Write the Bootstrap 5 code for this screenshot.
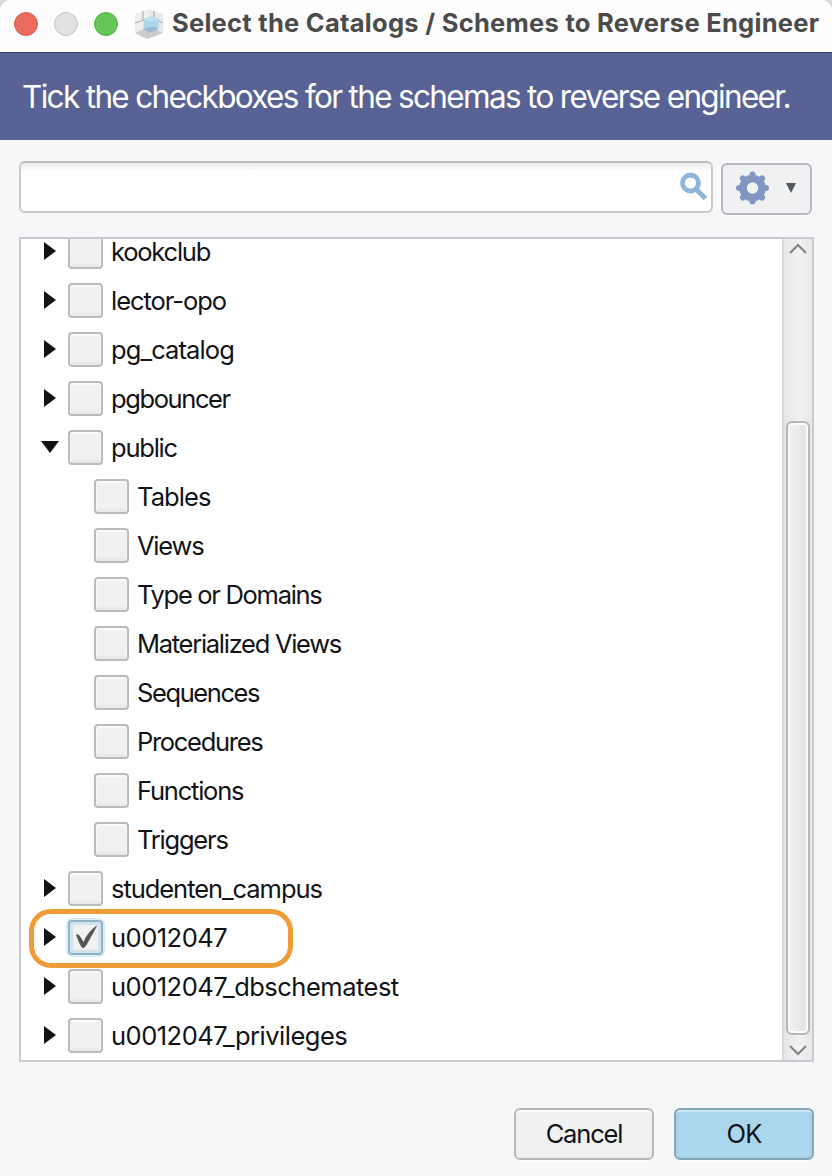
<!DOCTYPE html>
<html lang="en">
<head>
<meta charset="utf-8">
<title>Select the Catalogs / Schemes to Reverse Engineer</title>
<link href="https://cdn.jsdelivr.net/npm/bootstrap@5.3.0/dist/css/bootstrap.min.css" rel="stylesheet">
<style>
body{font-family:Inter,"Liberation Sans",sans-serif;font-size:25.5px;letter-spacing:-1.22px;color:#111317;background:#f5f7f9;line-height:1.2}
.dialog{width:832px;height:1176px;overflow:hidden;background:#f5f7f9}
.titlebar{height:53px;background:#fdfdfd;border-bottom:1px solid #303d75;padding:0 0 5px 14px;border-radius:10px 10px 0 0}
.backing{background:#d9d9dc}
.light{width:24px;height:24px;border-radius:50%;margin-right:16px;border:1px solid #d95b50;background:#eb6b5f}
.light.off{background:#e2e2e2;border-color:#c5c5c5}
.light.go{background:#63c655;border-color:#55ad47}
.title-text{font-size:25.5px;font-weight:700;letter-spacing:.27px;color:#4b4b4b;white-space:nowrap;margin:0 0 0 8px}
.banner{height:87px;background:#596295;color:#fff;font-size:31.5px;letter-spacing:-1.67px;padding:0 0 0 22px;white-space:nowrap}
.search{width:694px;height:52px;margin-top:1px;border:2px solid #c8cacb;border-top-color:#b9bbbc;border-radius:6px;background:linear-gradient(#ececec,#fff 9px);padding-right:3px}
.tool{width:91px;height:52px;margin:3px 1px 0 0;border:2px solid #b7b8bb;border-radius:6px;background:#f0f1f3;box-shadow:0 0 0 2px #fafbfc;padding:0 14px 2px 13px}
.tree-box{height:825px;margin:22px 18px 0 19px;border:2px solid #c9cacd;background:#fff}
.tree{margin-top:-12px}
.node{height:49px;padding-left:23px}
.node.child{padding-left:73px}
.node .label-text{margin-top:2px}
.node .numeric{letter-spacing:-.51px}
.node .wide{letter-spacing:-1.05px}
.arrow{width:12px;height:18px;margin:-1px 12px 0 0;background:#111317;clip-path:polygon(0 0,100% 50%,0 100%)}
.arrow.open{width:18px;height:12px;margin:-1px 9px 0 -3px;clip-path:polygon(0 0,100% 0,50% 100%)}
.box{width:35px;height:35px;border:2px solid #babbbc;border-radius:4px;background:#f0f1f3;box-shadow:inset 0 1px 1px 1px #fbfbfc,inset 0 -2px 2px 1px #e6e7e9;margin-right:8px}
.box.on{border-color:#94b3c7;box-shadow:0 0 0 2px #d8edf5,inset 0 0 1px 3px #cfe4ec}
.ring{left:8px;top:-4px;width:264px;height:59px;border:5px solid #ef9b38;border-radius:22px}
.scroll{width:30px;border-left:2px solid #d9dadb;background:linear-gradient(90deg,#e5e6e8,#f1f2f2 55%,#e7e8ea);padding:4px 2px 4px}
.thumb{width:24px;height:614px;margin-top:166px;border:2px solid #b6b7ba;border-radius:6px;background:linear-gradient(90deg,#f2f3f3,#dfe2e1);box-shadow:inset 0 0 0 2px #fcfcfc}
.footer-row{margin:46px 18px 0;gap:20px}
.act{width:140px;height:52px;padding:0;border:2px solid #b7b8bb;border-radius:6px;background:#f0f1f3;color:#111317;font-size:25.5px;letter-spacing:-1.15px;box-shadow:inset 0 2px 1px #fff,inset 0 0 0 2px #eceded,0 2px 0 #fbfcfd}
.act.ok{letter-spacing:-.9px;background:#abd7ec;border-color:#84a8b9;box-shadow:inset 0 2px 1px #cfe8f4,inset 0 0 0 2px #a5cee1,0 2px 0 #fbfcfd}
</style>
</head>
<body>
<main class="dialog d-flex flex-column">
  <div class="backing"><header class="titlebar d-flex align-items-center">
    <span class="light"></span><span class="light off"></span><span class="light go"></span>
    <svg width="30" height="32" viewBox="0 0 30 32" class="flex-shrink-0">
      <path d="M1 6 15 1V20L1 25Z" fill="#f0f0f0"/><path d="M15 1 29 6V25L15 20Z" fill="#e9e9e9"/>
      <path d="M1 25 12 20H18L29 25 13 31Z" fill="#cbcbcb"/>
      <path d="M9 3V13M1 15 10 12M20 3V11M23 12 29 15" fill="none" stroke="#acacac" stroke-width="1.100"/>
      <path d="M9.500 11 17 8.500 24.500 11V21L16 24.500 9.500 21Z" fill="#add6ea"/>
      <path d="M9.500 11 17 8.500 24.500 11 16 13.500Z" fill="#bfe0ef"/><path d="M9.500 21 18 18.500 24.500 21 16 24.500Z" fill="#98b9ce"/>
    </svg>
    <span class="title-text">Select the Catalogs / Schemes to Reverse Engineer</span>
  </header></div>
  <div class="banner d-flex align-items-center">Tick the checkboxes for the schemas to reverse engineer.</div>
  <div class="d-flex flex-shrink-0" style="padding:20px 19px 0">
    <div class="search d-flex align-items-center justify-content-end">
      <svg width="28" height="30" viewBox="0 0 28 30"><circle cx="10.500" cy="11" r="8" fill="none" stroke="#8fb5db" stroke-width="4.800"/><path d="m16 17 9.500 9.500" stroke="#8fb5db" stroke-width="5.200"/></svg>
    </div>
    <div class="tool d-flex align-items-center justify-content-between ms-auto">
      <svg width="33" height="34" viewBox="-16.500 -17 33 34"><g fill="#8197c1"><circle r="13.300"/><rect x="-3" y="-16.500" width="6" height="33" rx="3"/><rect x="-3" y="-16.500" width="6" height="33" rx="3" transform="rotate(45)"/><rect x="-3" y="-16.500" width="6" height="33" rx="3" transform="rotate(90)"/><rect x="-3" y="-16.500" width="6" height="33" rx="3" transform="rotate(135)"/></g><circle r="5.700" fill="#f2f3f5"/></svg>
      <svg width="10" height="10" viewBox="0 0 10 10"><path d="M0 0H10L5 10Z" fill="#55585b"/></svg>
    </div>
  </div>
  <section class="tree-box d-flex overflow-hidden flex-shrink-0">
    <div class="tree flex-grow-1">
      <div class="node d-flex align-items-center"><span class="arrow"></span><span class="box"></span><span class="label-text">kookclub</span></div>
      <div class="node d-flex align-items-center"><span class="arrow"></span><span class="box"></span><span class="label-text wide">lector-opo</span></div>
      <div class="node d-flex align-items-center"><span class="arrow"></span><span class="box"></span><span class="label-text" style="letter-spacing:-.9px">pg_catalog</span></div>
      <div class="node d-flex align-items-center"><span class="arrow"></span><span class="box"></span><span class="label-text" style="letter-spacing:-1.4px">pgbouncer</span></div>
      <div class="node d-flex align-items-center"><span class="arrow open"></span><span class="box"></span><span class="label-text">public</span></div>
      <div class="node child d-flex align-items-center"><span class="box"></span><span class="label-text" style="letter-spacing:-.9px">Tables</span></div>
      <div class="node child d-flex align-items-center"><span class="box"></span><span class="label-text">Views</span></div>
      <div class="node child d-flex align-items-center"><span class="box"></span><span class="label-text" style="letter-spacing:-1.3px">Type or Domains</span></div>
      <div class="node child d-flex align-items-center"><span class="box"></span><span class="label-text" style="letter-spacing:-1.28px">Materialized Views</span></div>
      <div class="node child d-flex align-items-center"><span class="box"></span><span class="label-text" style="letter-spacing:-1.4px">Sequences</span></div>
      <div class="node child d-flex align-items-center"><span class="box"></span><span class="label-text" style="letter-spacing:-1.3px">Procedures</span></div>
      <div class="node child d-flex align-items-center"><span class="box"></span><span class="label-text">Functions</span></div>
      <div class="node child d-flex align-items-center"><span class="box"></span><span class="label-text">Triggers</span></div>
      <div class="node d-flex align-items-center"><span class="arrow"></span><span class="box"></span><span class="label-text wide">studenten_campus</span></div>
      <div class="node d-flex align-items-center position-relative"><span class="arrow"></span><span class="box on d-flex"><svg width="31" height="31" viewBox="0 0 31 31"><path d="M6 13Q8 11 10.500 15L13.500 20Q18 9 27.500 3Q23 12 16.500 23Q13.500 28 11.500 25Q10 23 6 13Z" fill="#555"/></svg></span><span class="label-text numeric">u0012047</span><span class="ring position-absolute"></span></div>
      <div class="node d-flex align-items-center"><span class="arrow"></span><span class="box"></span><span class="label-text numeric">u0012047_dbschematest</span></div>
      <div class="node d-flex align-items-center"><span class="arrow"></span><span class="box"></span><span class="label-text numeric">u0012047_privileges</span></div>
    </div>
    <div class="scroll d-flex flex-column align-items-center">
      <svg width="18" height="12" viewBox="0 0 18 12" class="flex-shrink-0"><path d="M1 10 9 2l8 8" fill="none" stroke="#808384" stroke-width="2"/></svg>
      <div class="thumb flex-shrink-0"></div>
      <svg width="18" height="12" viewBox="0 0 18 12" class="mt-auto flex-shrink-0"><path d="M1 2 9 10l8-8" fill="none" stroke="#808384" stroke-width="2"/></svg>
    </div>
  </section>
  <div class="footer-row d-flex justify-content-end">
    <button class="btn act">Cancel</button><button class="btn act ok">OK</button>
  </div>
</main>
<script src="https://cdn.jsdelivr.net/npm/bootstrap@5.3.0/dist/js/bootstrap.bundle.min.js"></script>
</body>
</html>
